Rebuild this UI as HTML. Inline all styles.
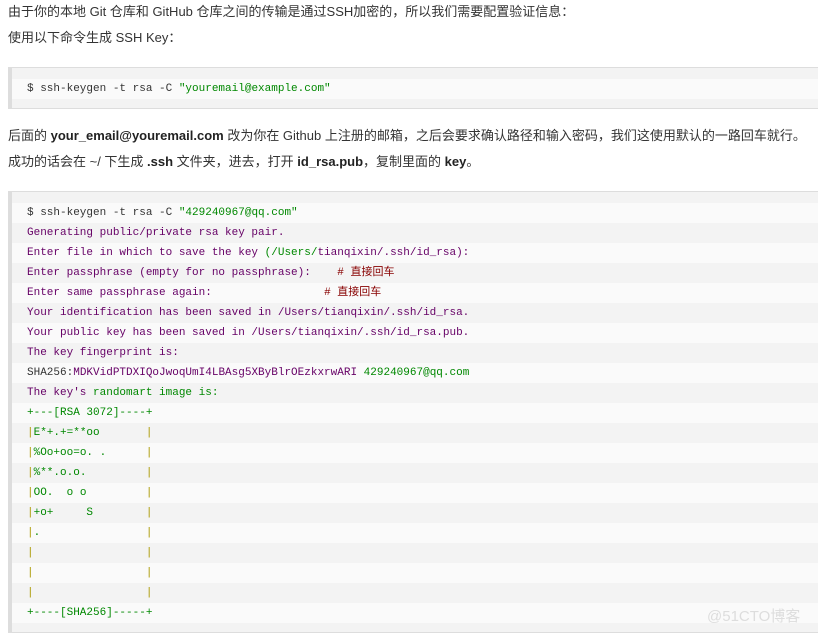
<!DOCTYPE html>
<html><head><meta charset="utf-8"><style>
body{margin:0;width:818px;height:634px;overflow:hidden;background:#fff;font-family:"Liberation Sans","Noto Sans CJK SC",sans-serif;color:#333;font-size:13px;}
p{position:absolute;left:8px;margin:0;white-space:nowrap;line-height:20px;}
b{color:#222}
.blk{position:absolute;left:8px;right:0;border-top:1px solid #ddd;border-bottom:1px solid #ddd;border-left:4px solid #ddd;background:#f3f3f3;box-sizing:border-box;}
.code{font-family:"Liberation Mono","Noto Sans CJK SC",monospace;font-size:11px;}
.row{height:20px;line-height:20px;padding-left:15px;white-space:pre;}
.row:nth-child(odd){background:#fafafa}
.s{color:#080}.k{color:#606}.c{color:#800}.y{color:#a90}.d{color:#333}
</style></head><body>
<p style="top:2px">由于你的本地 Git 仓库和 GitHub 仓库之间的传输是通过SSH加密的，所以我们需要配置验证信息：</p>
<p style="top:28px">使用以下命令生成 SSH Key：</p>
<div class="blk code" style="top:67px;height:42px;padding-top:11px"><div class="row" style="background:#fafafa"><span class="d">$ ssh-keygen -t rsa -C </span><span class="s">"youremail@example.com"</span></div></div>
<p style="top:126px">后面的 <b>your_email@youremail.com</b> 改为你在 Github 上注册的邮箱，之后会要求确认路径和输入密码，我们这使用默认的一路回车就行。</p>
<p style="top:152px">成功的话会在 ~/ 下生成 <b>.ssh</b> 文件夹，进去，打开 <b>id_rsa.pub</b>，复制里面的 <b>key</b>。</p>
<div class="blk code" style="top:191px;height:442px;padding-top:11px"><div><div class="row"><span class="d">$ ssh-keygen -t rsa -C </span><span class="s">"429240967@qq.com"</span></div><div class="row k">Generating public/private rsa key pair.</div><div class="row k">Enter file in which to save the key <span class="s">(/Users/</span>tianqixin/.ssh/id_rsa):</div><div class="row k">Enter passphrase (empty for no passphrase):    <span class="c"># 直接回车</span></div><div class="row k">Enter same passphrase again:                 <span class="c"># 直接回车</span></div><div class="row k">Your identification has been saved in /Users/tianqixin/.ssh/id_rsa.</div><div class="row k">Your public key has been saved in /Users/tianqixin/.ssh/id_rsa.pub.</div><div class="row k">The key fingerprint is:</div><div class="row"><span class="d">SHA256:</span><span class="k">MDKVidPTDXIQoJwoqUmI4LBAsg5XByBlrOEzkxrwARI</span><span class="s"> 429240967@qq.com</span></div><div class="row k">The key's <span class="s">randomart image is:</span></div><div class="row s">+---[RSA 3072]----+</div><div class="row s"><span class="y">|</span>E*+.+=**oo       <span class="y">|</span></div><div class="row s"><span class="y">|</span>%Oo+oo=o. .      <span class="y">|</span></div><div class="row s"><span class="y">|</span>%**.o.o.         <span class="y">|</span></div><div class="row s"><span class="y">|</span>OO.  o o         <span class="y">|</span></div><div class="row s"><span class="y">|</span>+o+     S        <span class="y">|</span></div><div class="row s"><span class="y">|</span>.                <span class="y">|</span></div><div class="row s"><span class="y">|</span>                 <span class="y">|</span></div><div class="row s"><span class="y">|</span>                 <span class="y">|</span></div><div class="row s"><span class="y">|</span>                 <span class="y">|</span></div><div class="row s">+----[SHA256]-----+</div></div></div>
<div style="position:absolute;left:707px;top:605px;font-size:15px;color:#ddd">@51CTO博客</div>
</body></html>
